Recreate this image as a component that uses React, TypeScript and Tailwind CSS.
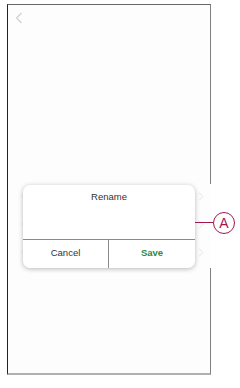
const Chevron = ({ dir, className }: { dir: 'left' | 'right'; className?: string }) => (
  <svg viewBox="0 0 8 12" className={className} fill="none" stroke="currentColor" strokeWidth="1.2">
    {dir === 'left' ? <path d="M6.5 1 L1.5 6 L6.5 11" /> : <path d="M1.5 1 L6.5 6 L1.5 11" />}
  </svg>
)

const rows = ['Rename', 'Icon', 'Delete']

export default function App() {
  return (
    <div className="relative w-[240px] h-[388px] bg-white pt-[4px] pl-[7px] font-['Liberation_Sans',Arial,sans-serif]">
      <div className="w-[204px] h-[371px] bg-[#fdfdfd] border-l border-l-[#222] border-t border-t-[#666] border-r border-r-[#808080] border-b-2 border-b-[#b0b0b0] flex flex-col">
        <div className="pl-[7px] pt-[7px]">
          <Chevron dir="left" className="w-[8px] h-[12px] text-[#cfcfcf]" />
        </div>

        {/* settings list under the dialog */}
        <div className="mt-[158px] flex flex-col">
          {rows.map((r) => (
            <div key={r} className="h-[28px] flex items-center justify-between pl-[12px] pr-[6px]">
              <Chevron dir="left" className="w-[5px] h-[8px] text-[#eeeeee]" />
              <Chevron dir="right" className="w-[6px] h-[9px] text-[#e2e2e2]" />
            </div>
          ))}
        </div>
      </div>

      {/* gap in the frame's right edge beside the dialog */}
      <div className="absolute left-[210px] top-[184px] w-[2px] h-[84px] bg-white" />

      {/* dialog */}
      <div className="absolute left-[23px] top-[185px] w-[172px] h-[83px] bg-white rounded-[7px] shadow-[0_1px_5px_rgba(0,0,0,0.28)] flex flex-col">
        <div className="h-[54px] pt-[6px] text-center text-[9.5px] leading-[12px] text-[#333]">Rename</div>
        <div className="flex-1 grid grid-cols-2 border-t border-[#8a8a8a]">
          <div className="flex items-center justify-center pb-[3px] text-[9.5px] leading-[12px] text-[#333] border-r border-[#8a8a8a]">Cancel</div>
          <div className="flex items-center justify-center pb-[3px] text-[9.5px] leading-[12px] font-bold text-[#2b8a3e]">Save</div>
        </div>
      </div>

      {/* callout */}
      <div className="absolute left-[195px] top-[222px] w-[18px] h-[1px] bg-[#a3174f]" />
      <div className="absolute left-[213px] top-[212px] w-[22px] h-[22px] rounded-full border border-[#a3174f] flex items-center justify-center text-[14px] leading-none text-[#a3174f]">
        A
      </div>
    </div>
  )
}
